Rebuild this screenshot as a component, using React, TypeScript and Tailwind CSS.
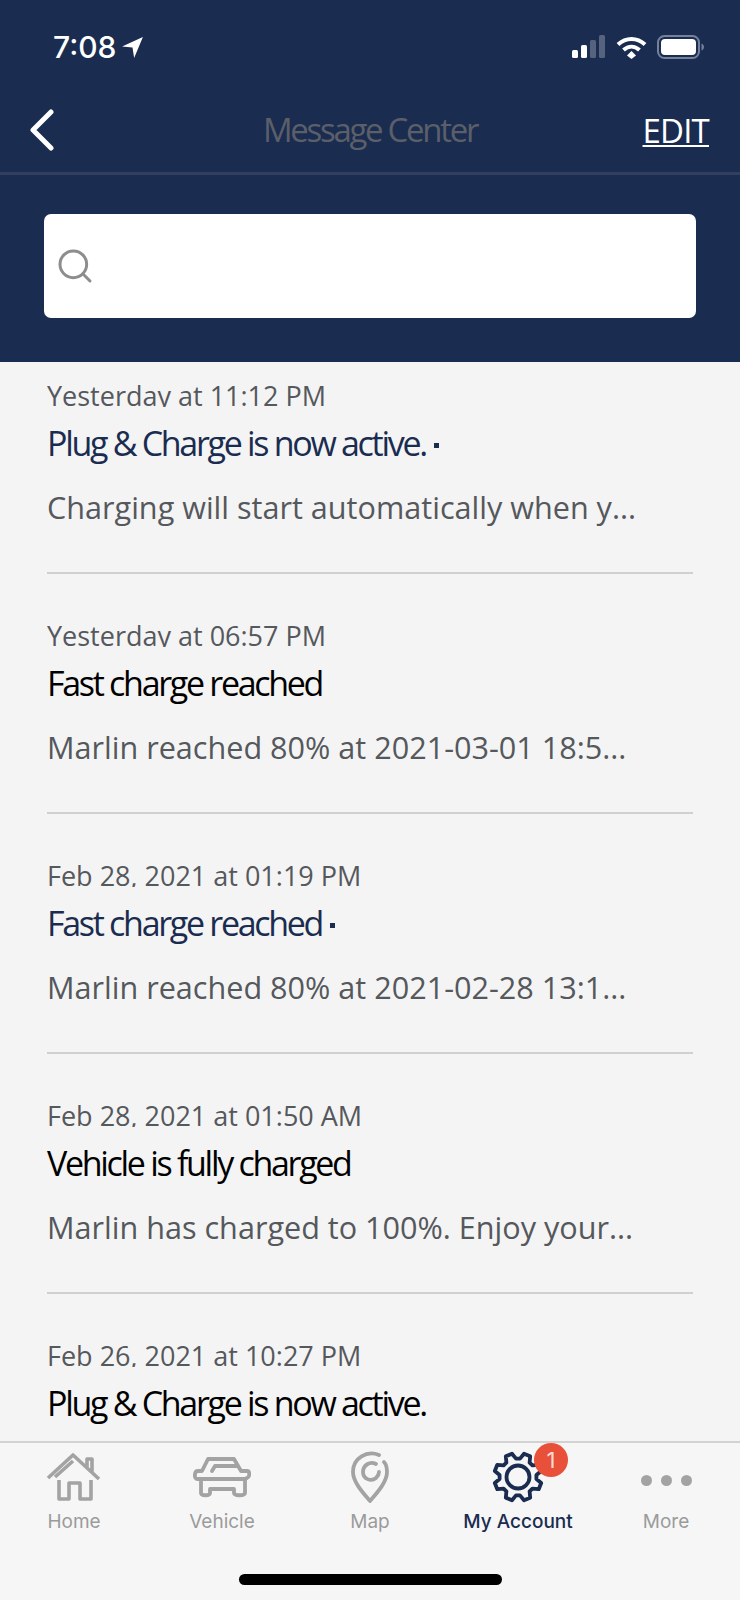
import React from "react";
import { Search } from "lucide-react";

const messages = [
  { date: "Yesterday at 11:12 PM", title: "Plug & Charge is now active.", body: "Charging will start automatically when y...", unread: true },
  { date: "Yesterday at 06:57 PM", title: "Fast charge reached", body: "Marlin reached 80% at 2021-03-01 18:5...", unread: false },
  { date: "Feb 28, 2021 at 01:19 PM", title: "Fast charge reached", body: "Marlin reached 80% at 2021-02-28 13:1...", unread: true },
  { date: "Feb 28, 2021 at 01:50 AM", title: "Vehicle is fully charged", body: "Marlin has charged to 100%. Enjoy your...", unread: false },
  { date: "Feb 26, 2021 at 10:27 PM", title: "Plug & Charge is now active.", unread: false },
];

// 8 tooth gear outline for the account tab
function gearPath() {
  const cx = 26;
  const cy = 26;
  const points: string[] = [];
  for (let i = 0; i < 8; i++) {
    const a = (i * Math.PI) / 4 + Math.PI / 8;
    const step = Math.PI / 8;
    const pt = (r: number, t: number) => `${(cx + r * Math.cos(t)).toFixed(1)} ${(cy + r * Math.sin(t)).toFixed(1)}`;
    points.push(pt(18.5, a - step * 0.72), pt(24, a - step * 0.36), pt(24, a + step * 0.36), pt(18.5, a + step * 0.72));
  }
  return `M${points.join("L")}Z`;
}

function StatusBar() {
  return (
    <div className="flex h-[94px] items-start justify-between pl-[53px] pr-[36px] pt-[29px] text-white">
      <div className="flex items-center gap-[5px]">
        <span className="font-['Inter',sans-serif] text-[30px] font-medium leading-[36px]">7:08</span>
        <svg width="23" height="23" viewBox="0 0 21 21" fill="white">
          <path d="M20 1 1 9.500l9.500 1L12 20z" />
        </svg>
      </div>
      <div className="flex items-center gap-[10px] pt-[6px]">
        <svg width="34" height="24" viewBox="0 0 34 24">
          <rect x="0" y="15" width="6" height="8" rx="1.500" fill="white" />
          <rect x="9" y="10" width="6" height="13" rx="1.500" fill="white" />
          <rect x="18" y="5" width="6" height="18" rx="1.500" fill="#56637f" />
          <rect x="27" y="0" width="6" height="23" rx="1.500" fill="#56637f" />
        </svg>
        <svg width="31" height="23" viewBox="0 0 31 23" fill="none" stroke="white" strokeWidth="4">
          <path d="M2 8.500c8-7.500 19-7.500 27 0" />
          <path d="M7.500 14c5-4.500 11-4.500 16 0" />
          <path d="M11 19.500 15.500 15 20 19.500 15.500 23z" fill="white" stroke="none" />
        </svg>
        <svg width="47" height="24" viewBox="0 0 47 24" fill="none">
          <rect x="1" y="1" width="41" height="22" rx="6.500" stroke="#75819b" strokeWidth="2" />
          <rect x="4" y="4" width="35" height="16" rx="4" fill="white" />
          <path d="M44.500 8.500c1.500.5 2.500 2 2.500 3.500s-1 3-2.500 3.500z" fill="#75819b" />
        </svg>
      </div>
    </div>
  );
}

function NavBar() {
  return (
    <div className="relative flex h-[81px] items-center justify-between border-b-[3px] border-[#323f5f] pb-[7px] pl-[29px] pr-[31px]">
      <svg width="26" height="42" viewBox="0 0 26 42" fill="none" stroke="white" strokeWidth="5" strokeLinecap="round" strokeLinejoin="round">
        <path d="M22 3 4 21l18 18" />
      </svg>
      <span className="absolute left-0 right-0 top-[15px] text-center font-['Open_Sans',sans-serif] text-[33px] leading-[42px] tracking-[-2.300px] text-[#5b5f69]">
        Message Center
      </span>
      <span className="mt-[2px] font-['Open_Sans',sans-serif] text-[33px] leading-[36px] tracking-[-0.800px] text-white underline decoration-2 underline-offset-[2px]">
        EDIT
      </span>
    </div>
  );
}

function SearchBox() {
  return (
    <div className="px-[44px] pb-[44px] pt-[39px]">
      <div className="flex h-[104px] items-center rounded-[7px] bg-white pl-[11px]">
        <Search size={40} strokeWidth={1.800} className="text-[#8d8d8d]" />
      </div>
    </div>
  );
}

function MessageRow({ date, title, body, unread }: { date: string; title: string; body?: string; unread: boolean }) {
  return (
    <div className="mx-[47px] mb-[46px] border-b-2 border-[#d0d0d0] pb-[46px]">
      <div className="h-[27px] overflow-hidden font-['Open_Sans',sans-serif] text-[27px] leading-[32px] text-[#55585c]">
        {date}
      </div>
      <div
        className={`mt-[15px] flex h-[42px] items-center gap-[8px] font-['Open_Sans',sans-serif] text-[34px] leading-[42px] tracking-[-2.300px] ${unread ? "text-[#1a2c50]" : "text-black"}`}
      >
        {title}
        {unread && <span className="mt-[5px] h-[5px] w-[5px] bg-[#1a2c50]" />}
      </div>
      {body && (
        <div className="mt-[24px] font-['Open_Sans',sans-serif] text-[30.600px] leading-[38px] text-[#55585c]">
          {body}
        </div>
      )}
    </div>
  );
}

function Tab({ label, active, children }: { label: string; active?: boolean; children: React.ReactNode }) {
  return (
    <div className="flex flex-1 flex-col items-center">
      <div className="flex h-[66px] w-full items-center justify-center">{children}</div>
      <span className={`font-['Inter',sans-serif] text-[19px] leading-[24px] ${active ? "font-medium text-[#1a2c50]" : "text-[#9b9b9b]"}`}>
        {label}
      </span>
    </div>
  );
}

function TabBar() {
  return (
    <div className="flex h-[159px] shrink-0 flex-col border-t-2 border-[#d2d2d2] bg-[#f6f6f6]">
      <div className="flex pt-px">
        <Tab label="Home">
          <svg width="56" height="48" viewBox="0 0 56 48" fill="none" stroke="#a3a3a3" strokeWidth="3.600" strokeLinejoin="round">
            <path d="M2 25 27 2l26 24M9 24 27 8M41 14V6h5v14" />
            <path d="M13 27v19h10V30h11v16h11V27" />
          </svg>
        </Tab>
        <Tab label="Vehicle">
          <svg width="58" height="42" viewBox="0 0 58 42" fill="none" stroke="#a3a3a3" strokeWidth="3.800" strokeLinejoin="round" strokeLinecap="round">
            <path d="M9 15 15 3h26l7 12h6c3 0 3 6 0 7l-2 1H4c-3 0-3-8 1-8z" />
            <path d="M19 15 22 10h22" />
            <path d="M8 23v14c0 3 9 3 9 0v-4h24v4c0 3 11 3 11 0V23" />
          </svg>
        </Tab>
        <Tab label="Map">
          <svg width="42" height="52" viewBox="0 0 42 52" fill="none" stroke="#a3a3a3" strokeWidth="3.800" strokeLinecap="round" strokeLinejoin="round">
            <path d="M30 4C18-1 4 7 4 21c0 10 10 21 17 29 7-8 17-19 17-29 0-4-1-8-3-10" />
            <path d="M27 13c-6-3-13 1-13 8s8 10 13 6c2-2 3-4 3-6" />
          </svg>
        </Tab>
        <Tab label="My Account" active>
          <div className="relative flex h-[52px] w-[52px] items-center justify-center">
            <svg width="52" height="52" viewBox="0 0 52 52" fill="none" stroke="#1a2c50" strokeWidth="3.800" strokeLinejoin="round">
              <path d={gearPath()} />
              <circle cx="26" cy="26" r="11.500" />
            </svg>
            <span className="absolute left-[42px] top-[-8px] flex h-[34px] w-[34px] items-center justify-center rounded-full bg-[#e8503a] font-['Inter',sans-serif] text-[22px] leading-none text-[#f8dcd6]">
              1
            </span>
          </div>
        </Tab>
        <Tab label="More">
          <div className="flex gap-[9px] pt-[6px]">
            <span className="h-[11px] w-[11px] rounded-full bg-[#a3a3a3]" />
            <span className="h-[11px] w-[11px] rounded-full bg-[#a3a3a3]" />
            <span className="h-[11px] w-[11px] rounded-full bg-[#a3a3a3]" />
          </div>
        </Tab>
      </div>
      <div className="mt-[40px] flex justify-center">
        <div className="h-[11px] w-[263px] rounded-full bg-black" />
      </div>
    </div>
  );
}

export default function App() {
  return (
    <div className="flex h-[1600px] w-[740px] flex-col overflow-hidden bg-[#f4f4f4]">
      <div className="shrink-0 bg-[#1a2c50]">
        <StatusBar />
        <NavBar />
        <SearchBox />
      </div>
      <div className="min-h-0 flex-1 overflow-hidden pt-[18px]">
        {messages.map((m) => (
          <MessageRow key={m.date} {...m} />
        ))}
      </div>
      <TabBar />
    </div>
  );
}
